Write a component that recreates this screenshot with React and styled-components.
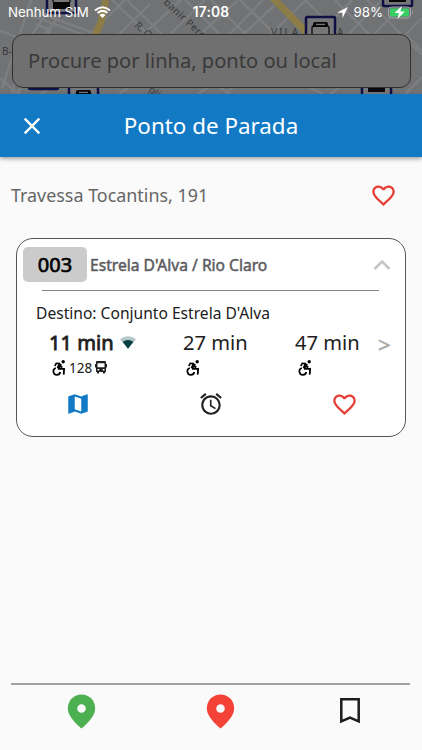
import { createGlobalStyle, styled } from 'styled-components'
import {
    MdAlarm,
    MdClose,
    MdFavoriteBorder,
    MdMap,
} from 'react-icons/md'

const arrivals = [
    { minutes: 11, live: true, vehicle: '128' },
    { minutes: 27 },
    { minutes: 47 },
]

const GlobalStyle = createGlobalStyle`
    * {
        box-sizing: border-box;
    }
    body {
        margin: 0;
        background-color: #fafafa;
        font-family: "Noto Sans", sans-serif;
    }
    svg {
        display: block;
        flex: none;
    }
`

const Screen = styled.div`
    width: 422px;
    height: 750px;
    display: flex;
    flex-direction: column;
    overflow: hidden;
    background-color: #fafafa;
`

const MapArea = styled.div`
    position: relative;
    flex: none;
    height: 94px;
    overflow: hidden;
    background-color: #717274;
`
const MapCanvas = styled.svg`
    position: absolute;
    top: 0;
    left: 0;
`
const MapOverlay = styled.div`
    position: relative;
`
const StatusBar = styled.div`
    display: grid;
    grid-template-columns: 1fr auto 1fr;
    align-items: center;
    height: 24px;
    margin-bottom: 10px;
    padding: 0 8px;
    color: #ffffff;
    font-family: Inter, sans-serif;
    font-size: 13.3px;
`
const StatusGroup = styled.div`
    display: flex;
    align-items: center;
    justify-content: ${(props) => props.$end ? 'flex-end' : 'flex-start'};
    gap: 5px;
    white-space: nowrap;
`
const Clock = styled.div`
    font-size: 13.8px;
    font-weight: 600;
    letter-spacing: 0.2px;
`
const SearchField = styled.div`
    display: flex;
    align-items: center;
    height: 54px;
    margin: 0 11px 0 12px;
    padding: 0 15px 2px;
    border: 1px solid #303030;
    border-radius: 11px;
    background-color: #707070;
    color: #3a3a3a;
    font-size: 20.1px;
`

const Header = styled.div`
    position: relative;
    flex: none;
    display: grid;
    grid-template-columns: 64px 1fr 64px;
    align-items: center;
    height: 63px;
    background-color: #127ac5;
    box-shadow: 0 2px 4px rgba(0, 0, 0, 0.35);
    color: #ffffff;
`
const CloseButton = styled.div`
    display: flex;
    justify-content: center;
`
const Title = styled.div`
    padding-bottom: 1px;
    text-align: center;
    font-size: 22.4px;
`

const StopRow = styled.div`
    flex: none;
    display: flex;
    align-items: center;
    justify-content: space-between;
    height: 77px;
    padding: 0 25px 1px 11px;
    color: #666666;
    font-size: 17.9px;
`

const Card = styled.div`
    flex: none;
    height: 199px;
    margin: 4px 16px 0;
    border: 1px solid #555555;
    border-radius: 17px;
    background-color: #ffffff;
    color: #202020;
`
const CardHeader = styled.div`
    display: flex;
    align-items: center;
    height: 51px;
    padding: 0 14px 0 6px;
`
const LineBadge = styled.div`
    flex: none;
    width: 64px;
    height: 35px;
    margin-right: 3px;
    border-radius: 5px;
    background-color: #cbcbcb;
    color: #000000;
    text-align: center;
    line-height: 35px;
    font-size: 20px;
    -webkit-text-stroke: 0.7px #000000;
`
const LineName = styled.div`
    flex: 1;
    color: #5c5c60;
    font-size: 15.6px;
    -webkit-text-stroke: 0.5px #5c5c60;
    white-space: nowrap;
`
const Divider = styled.div`
    flex: none;
    height: ${(props) => props.$thick ? '2px' : '1px'};
    margin: ${(props) => props.$margin};
    background-color: ${(props) => props.$thick ? '#a0a0a0' : '#858585'};
`
const Destination = styled.div`
    height: 22px;
    margin: 11px 0 0 19px;
    line-height: 22px;
    font-size: 15.6px;
`
const ArrivalList = styled.div`
    display: grid;
    grid-template-columns: 134px 112px 82px 1fr;
    height: 52px;
    padding-left: 32px;
`
const ArrivalTime = styled.div`
    display: flex;
    align-items: center;
    gap: 6px;
    height: 37px;
    font-size: 20.1px;
    -webkit-text-stroke: ${(props) => props.$live ? '0.8px #202020' : '0'};
    white-space: nowrap;
`
const VehicleInfo = styled.div`
    display: flex;
    align-items: center;
    gap: 3px;
    height: 13px;
    padding-left: 3px;
    font-size: 13.5px;
`
const More = styled.div`
    padding-left: 1px;
    color: #aaaaaa;
    font-size: 22px;
    line-height: 40px;
    -webkit-text-stroke: 0.5px #aaaaaa;
`
const Actions = styled.div`
    display: grid;
    grid-template-columns: repeat(3, 133.5px);
    justify-content: center;
    justify-items: center;
    margin-top: 15px;
`

const BottomBar = styled.div`
    flex: none;
    height: 67px;
    margin-top: auto;
`
const BottomActions = styled.div`
    display: grid;
    grid-template-columns: 139px 139px 120px;
    align-items: center;
    justify-items: center;
    height: 52px;
    padding-left: 12px;
`

function BusMarker({ x, y }) {
    return (
        <g transform={`translate(${x} ${y})`}>
            <rect x="1" y="1" width="29" height="28" rx="1" fill="#777779" stroke="#111044" strokeWidth="2.5" />
            <path d="M10 6h11q2 0 2 2v3H8V8q0-2 2-2z" fill="#080808" />
            <path d="M11 8.5h9" stroke="#777779" strokeWidth="1.5" />
            <path d="M7 18V12q0-2 2-2h13q2 0 2 2v6" fill="none" stroke="#080808" strokeWidth="1.3" />
            <path d="M7 18h17v7H7z" fill="#080808" />
        </g>
    )
}

function CityMap() {
    return (
        <MapCanvas width="422" height="94" viewBox="0 0 422 94">
            <g fill="none" stroke="#7d7e80" strokeWidth="2.4">
                <path d="M0 31L42 46M31 0L2 88M56 0L22 49L12 94M73 0L38 42L18 94M14 9L92 38M45 15L118 42M35 24l15 6l-8 24" />
                <path d="M112 0L185 70M127 0L196 68M84 40L125 0M101 52L150 4M128 48L181 0M160 44L205 0M183 50L238 0M207 57L263 0" />
                <path d="M185 0L258 72M211 0L279 67M240 0L307 66M305 0L365 60M335 0L398 63M367 0L422 55M235 42L280 0M260 45L306 0M310 44L352 0M336 47L382 0M360 49L407 0M387 53L422 18" />
                <path d="M0 78l18 16M41 94l13-9M92 94l16-11M119 94l20-14M198 94l15-10l18 10M225 94l18-15M295 80l28 14M330 94l17-12M372 94l19-14M405 94l17-17M407 36l15 15" />
            </g>
            <path d="M106 0L101 22L94 38" fill="none" stroke="#8b7c48" strokeWidth="7" />
            <path d="M271-4L308 34" fill="none" stroke="#8b7c48" strokeWidth="7" />
            <BusMarker x={46} y={-16} />
            <BusMarker x={305} y={16} />
            <BusMarker x={382} y={-23} />
            <BusMarker x={28} y={60} />
            <BusMarker x={68} y={84} />
            <BusMarker x={361} y={67} />
            <g fill="#37383a" fontFamily="Noto Sans, sans-serif" fontSize="10">
                <text x="2" y="55">B-</text>
                <text x="134" y="26" transform="rotate(43 134 26)">R. Ol</text>
                <text x="163" y="3" transform="rotate(43 163 3)" letterSpacing="0.5">banir Pere</text>
                <text x="271" y="36" letterSpacing="2">VILA</text>
                <text x="337" y="36" letterSpacing="2">A</text>
                <text x="148" y="91" transform="rotate(38 148 91)">gli</text>
            </g>
        </MapCanvas>
    )
}

function WifiIcon() {
    return (
        <svg width="17" height="13" viewBox="0 0 17 13">
            <path d="M1 4.5Q8.5-2 16 4.5M3.5 7Q8.5 2.7 13.5 7" fill="none" stroke="#ffffff" strokeWidth="2" />
            <path d="M5.5 9Q8.5 6.5 11.5 9L8.5 12z" fill="#ffffff" />
        </svg>
    )
}

function LocationIcon() {
    return (
        <svg width="11" height="11" viewBox="0 0 11 11">
            <path d="M0 5.5L11 0L5.6 11L5.3 5.8z" fill="#ffffff" />
        </svg>
    )
}

function BatteryIcon() {
    return (
        <svg width="26" height="13" viewBox="0 0 26 13">
            <rect x=".5" y="1" width="22" height="11" rx="3" fill="none" stroke="#a6a7a8" />
            <rect x="2" y="2.5" width="19" height="8" rx="1.5" fill="#38cf62" />
            <path d="M24 5q2 1.5 0 3z" fill="#a6a7a8" />
            <path d="M13.8 0L6.5 7.1h4.3L9.4 13L16.8 5.6h-4.4z" fill="#ffffff" />
        </svg>
    )
}

function SignalIcon() {
    return (
        <svg width="16" height="13" viewBox="0 0 16 13">
            <path d="M0 3.2Q8-2.8 16 3.2L8 13z" fill="#b5c6c8" />
            <path d="M2.7 5.7Q8 2.3 13.3 5.7L8 12.7z" fill="#063f40" />
        </svg>
    )
}

function WheelchairIcon() {
    return (
        <svg width="14" height="16" viewBox="0 0 14 16">
            <circle cx="11.2" cy="1.8" r="1.7" fill="#000000" />
            <g fill="none" stroke="#000000">
                <path d="M2.8 6.1L4.2 3.3L8 3.6" strokeWidth="1.6" />
                <path d="M8.3 3.6L6.2 8.4" strokeWidth="3.3" />
                <path d="M5.8 8.8h6.300l-.4 5.800M8.300 6l2 1.500" strokeWidth="1.8" />
                <path d="M3.800 8A3.500 3.500 0 1 0 8.300 12" strokeWidth="1.7" />
            </g>
        </svg>
    )
}

function BusIcon() {
    return (
        <svg width="12" height="13" viewBox="0 0 12 13">
            <path
                d="M2 0h8q1 0 1 1v2h1v3.5h-1V11h-1v1.5H8V11H4v1.5H2V11H1V6.5H0V3h1V1q0-1 1-1zM2.5 2.2v4h7v-4zM2.5 8v1.5h1.7V8zM7.800 8v1.5h1.7V8z"
                fill="#202020"
                fillRule="evenodd"
            />
        </svg>
    )
}

function PinIcon({ color }) {
    return (
        <svg width="41" height="41" viewBox="0 0 24 24">
            <path d="M12 2c-4.2 0-8 3.22-8 8.2 0 3.32 2.67 7.25 8 11.8 5.33-4.55 8-8.48 8-11.8C20 5.22 16.2 2 12 2z" fill={color} />
            <circle cx="12" cy="10.3" r="2.5" fill="#fafafa" />
        </svg>
    )
}

function BookmarkIcon() {
    return (
        <svg width="20" height="26" viewBox="0 0 20 26">
            <path d="M1.3 1.3h17.4v22L10 19.6l-8.7 3.7z" fill="none" stroke="#1c1c1c" strokeWidth="2.5" />
        </svg>
    )
}

function Arrival({ minutes, live, vehicle }) {
    return (
        <div>
            <ArrivalTime $live={live}>
                {`${minutes} min`}
                {live && <SignalIcon />}
            </ArrivalTime>
            <VehicleInfo>
                <WheelchairIcon />
                {vehicle && <span>{vehicle}</span>}
                {vehicle && <BusIcon />}
            </VehicleInfo>
        </div>
    )
}

function LineCard() {
    return (
        <Card>
            <CardHeader>
                <LineBadge>003</LineBadge>
                <LineName>Estrela D'Alva / Rio Claro</LineName>
                <svg width="18" height="12" viewBox="0 0 18 12">
                    <path d="M1.5 10L9 2.5L16.5 10" fill="none" stroke="#c6c6c6" strokeWidth="2.6" />
                </svg>
            </CardHeader>
            <Divider $margin="0 26px 0 25px" />
            <Destination>Destino: Conjunto Estrela D'Alva</Destination>
            <ArrivalList>
                {arrivals.map((arrival) => <Arrival key={arrival.minutes} {...arrival} />)}
                <More>{'>'}</More>
            </ArrivalList>
            <Actions>
                <MdMap size={26} color="#127ac5" />
                <MdAlarm size={26} />
                <MdFavoriteBorder size={27} color="#e53e35" />
            </Actions>
        </Card>
    )
}

function App() {
    return (
        <Screen>
            <GlobalStyle />
            <MapArea>
                <CityMap />
                <MapOverlay>
                    <StatusBar>
                        <StatusGroup>Nenhum SIM <WifiIcon /></StatusGroup>
                        <Clock>17:08</Clock>
                        <StatusGroup $end><LocationIcon /> 98% <BatteryIcon /></StatusGroup>
                    </StatusBar>
                    <SearchField>Procure por linha, ponto ou local</SearchField>
                </MapOverlay>
            </MapArea>
            <Header>
                <CloseButton><MdClose size={28} /></CloseButton>
                <Title>Ponto de Parada</Title>
            </Header>
            <StopRow>
                Travessa Tocantins, 191
                <MdFavoriteBorder size={27} color="#e53e35" />
            </StopRow>
            <LineCard />
            <BottomBar>
                <Divider $thick $margin="0 12px 0 11px" />
                <BottomActions>
                    <PinIcon color="#4caf50" />
                    <PinIcon color="#f44336" />
                    <BookmarkIcon />
                </BottomActions>
            </BottomBar>
        </Screen>
    )
}

export default App
